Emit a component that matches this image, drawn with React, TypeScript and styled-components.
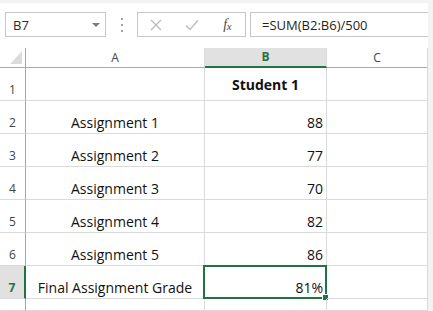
import React from 'react';
import styled, { createGlobalStyle } from 'styled-components';

const GlobalStyle = createGlobalStyle`
  body {
    margin: 0;
    background: #f3f3f3;
    font-family: 'Open Sans', 'Noto Sans', sans-serif;
  }
`;

const GREEN = '#217346';
const GRID = '#dadada';

const Frame = styled.div`
  width: 433px;
  height: 311px;
  box-sizing: border-box;
  padding: 3px 5px 0 0;
  background: #f3f3f3;
  overflow: hidden;
`;

const Sheet = styled.div`
  background: #ffffff;
  height: 100%;
`;

const Toolbar = styled.div`
  height: 45px;
  box-sizing: border-box;
  padding: 9px 0 0 5px;
  display: flex;
  align-items: flex-start;
`;

const NameBox = styled.div`
  width: 101px;
  height: 25px;
  box-sizing: border-box;
  border: 1px solid #c6c6c6;
  display: flex;
  align-items: center;
  justify-content: space-between;
  padding: 0 5px 0 7px;
  font-size: 13px;
  color: #2b2b2b;
`;

const DropArrow = styled.div`
  width: 0;
  height: 0;
  border-left: 4px solid transparent;
  border-right: 4px solid transparent;
  border-top: 4px solid #7a7a7a;
`;

const Grip = styled.div`
  width: 31px;
  height: 25px;
  display: flex;
  flex-direction: column;
  align-items: center;
  justify-content: center;
  gap: 4px;
`;

const GripDot = styled.span`
  width: 2px;
  height: 2px;
  background: #a3a3a3;
`;

const ButtonBox = styled.div`
  width: 109px;
  height: 25px;
  box-sizing: border-box;
  border: 1px solid #c6c6c6;
  display: flex;
`;

const ToolButton = styled.div`
  width: 36px;
  height: 100%;
  display: flex;
  align-items: center;
  justify-content: center;
`;

const FxLabel = styled.span`
  font-family: 'Liberation Serif', serif;
  font-style: italic;
  font-size: 14px;
  color: #4a4a4a;
  letter-spacing: -0.5px;

  sub {
    font-size: 11px;
    vertical-align: -1px;
  }
`;

const FormulaBox = styled.div`
  flex: 1;
  height: 25px;
  margin-left: 4px;
  box-sizing: border-box;
  border: 1px solid #c6c6c6;
  border-right: none;
  display: flex;
  align-items: center;
  padding-left: 11px;
  font-size: 13px;
  color: #1f1f1f;
`;

const Grid = styled.div`
  display: grid;
  grid-template-columns: 26px 179px 122px 101px;
  grid-template-rows: 20px repeat(7, 33px) 12px;
`;

const Corner = styled.div`
  box-sizing: border-box;
  border-right: 1px solid #a6a6a6;
  border-bottom: 1px solid #ababab;
  display: flex;
  align-items: flex-end;
  justify-content: flex-end;
  padding: 0 3px 3px 0;
`;

const CornerMark = styled.div`
  width: 0;
  height: 0;
  border-left: 12px solid transparent;
  border-bottom: 13px solid #dcdcdc;
`;

const ColHead = styled.div<{ $active?: boolean }>`
  box-sizing: border-box;
  display: flex;
  align-items: center;
  justify-content: center;
  font-size: 12px;
  line-height: 16px;
  color: ${(p) => (p.$active ? GREEN : '#444444')};
  font-weight: ${(p) => (p.$active ? 700 : 400)};
  background: ${(p) => (p.$active ? '#e1e1e1' : '#ffffff')};
  border-right: 1px solid ${GRID};
  border-bottom: ${(p) => (p.$active ? `2px solid ${GREEN}` : '1px solid #ababab')};
`;

const RowHead = styled.div<{ $active?: boolean }>`
  box-sizing: border-box;
  display: flex;
  align-items: flex-end;
  justify-content: center;
  padding-bottom: 2px;
  font-size: 12px;
  line-height: 16px;
  color: ${(p) => (p.$active ? GREEN : '#444444')};
  font-weight: ${(p) => (p.$active ? 700 : 400)};
  background: ${(p) => (p.$active ? '#e1e1e1' : '#ffffff')};
  border-right: ${(p) => (p.$active ? `2px solid ${GREEN}` : '1px solid #a6a6a6')};
  border-bottom: 1px solid ${GRID};
`;

const Cell = styled.div<{ $align?: 'left' | 'center' | 'right'; $middle?: boolean; $bold?: boolean }>`
  position: relative;
  box-sizing: border-box;
  display: flex;
  align-items: ${(p) => (p.$middle ? 'center' : 'flex-end')};
  justify-content: ${(p) =>
    p.$align === 'center' ? 'center' : p.$align === 'right' ? 'flex-end' : 'flex-start'};
  padding: ${(p) => (p.$middle ? '0 3px' : '0 3px 1px 3px')};
  font-size: 14px;
  line-height: 19px;
  font-weight: ${(p) => (p.$bold ? 700 : 400)};
  color: #111111;
  white-space: nowrap;
  border-right: 1px solid ${GRID};
  border-bottom: 1px solid ${GRID};
`;

const Selection = styled.div`
  position: absolute;
  top: -1px;
  left: -2px;
  right: -1px;
  bottom: -1px;
  border: 2px solid ${GREEN};
  pointer-events: none;
`;

const FillHandle = styled.div`
  position: absolute;
  right: -4px;
  bottom: -4px;
  width: 5px;
  height: 5px;
  background: ${GREEN};
  border: 1px solid #ffffff;
`;

const rows = [
  { label: 'Assignment 1', score: '88' },
  { label: 'Assignment 2', score: '77' },
  { label: 'Assignment 3', score: '70' },
  { label: 'Assignment 4', score: '82' },
  { label: 'Assignment 5', score: '86' },
];

const CrossIcon = () => (
  <svg width="12" height="12" viewBox="0 0 12 12">
    <path d="M1 1L11 11M11 1L1 11" stroke="#bdbdbd" strokeWidth="1.4" fill="none" />
  </svg>
);

const CheckIcon = () => (
  <svg width="14" height="12" viewBox="0 0 14 12">
    <path d="M1 6.5L5 10.5L13 1.5" stroke="#bdbdbd" strokeWidth="1.4" fill="none" />
  </svg>
);

const App: React.FC = () => {
  return (
    <Frame>
      <GlobalStyle />
      <Sheet>
        <Toolbar>
          <NameBox>
            <span>B7</span>
            <DropArrow />
          </NameBox>
          <Grip>
            <GripDot />
            <GripDot />
            <GripDot />
          </Grip>
          <ButtonBox>
            <ToolButton>
              <CrossIcon />
            </ToolButton>
            <ToolButton>
              <CheckIcon />
            </ToolButton>
            <ToolButton>
              <FxLabel>
                f<sub>x</sub>
              </FxLabel>
            </ToolButton>
          </ButtonBox>
          <FormulaBox>=SUM(B2:B6)/500</FormulaBox>
        </Toolbar>
        <Grid>
          <Corner>
            <CornerMark />
          </Corner>
          <ColHead>A</ColHead>
          <ColHead $active>B</ColHead>
          <ColHead>C</ColHead>

          <RowHead>1</RowHead>
          <Cell />
          <Cell $align="center" $middle $bold>
            Student 1
          </Cell>
          <Cell />

          {rows.map((r, i) => (
            <React.Fragment key={r.label}>
              <RowHead>{i + 2}</RowHead>
              <Cell $align="center">{r.label}</Cell>
              <Cell $align="right">{r.score}</Cell>
              <Cell />
            </React.Fragment>
          ))}

          <RowHead $active>7</RowHead>
          <Cell $align="center">Final Assignment Grade</Cell>
          <Cell $align="right">
            81%
            <Selection>
              <FillHandle />
            </Selection>
          </Cell>
          <Cell />

          <RowHead />
          <Cell />
          <Cell />
          <Cell />
        </Grid>
      </Sheet>
    </Frame>
  );
};

export default App;
